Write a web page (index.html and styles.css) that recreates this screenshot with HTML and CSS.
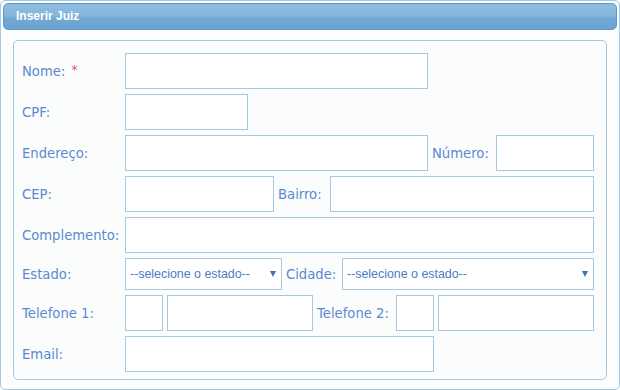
FILE: index.html
```html
<!DOCTYPE html>
<html lang="pt-BR">
<head>
  <meta charset="UTF-8" />
  <title>Inserir Juiz</title>
  <link rel="stylesheet" href="styles.css">
</head>
<body>

  <div class="panel">
    <div class="panel-header">Inserir Juiz</div>

    <div class="form-box">
      <div class="row">
        <label class="lbl">Nome: <span class="req">*</span></label>
        <input type="text" class="txt w-nome" />
      </div>
      <div class="row">
        <label class="lbl">CPF:</label>
        <input type="text" class="txt w-cpf" />
      </div>
      <div class="row">
        <label class="lbl">Endereço:</label>
        <input type="text" class="txt w-nome" />
        <label class="lbl-in w-numero-lbl">Número:</label>
        <input type="text" class="txt fill" />
      </div>
      <div class="row">
        <label class="lbl">CEP:</label>
        <input type="text" class="txt w-cep" />
        <label class="lbl-in w-bairro-lbl">Bairro:</label>
        <input type="text" class="txt fill" />
      </div>
      <div class="row">
        <label class="lbl">Complemento:</label>
        <input type="text" class="txt fill" />
      </div>
      <div class="row">
        <label class="lbl">Estado:</label>
        <span class="sel-wrap w-estado">
          <select class="sel"><option>--selecione o estado--</option></select>
        </span>
        <label class="lbl-in w-cidade-lbl">Cidade:</label>
        <span class="sel-wrap fill">
          <select class="sel"><option>--selecione o estado--</option></select>
        </span>
      </div>
      <div class="row">
        <label class="lbl">Telefone 1:</label>
        <input type="text" class="txt w-ddd" />
        <input type="text" class="txt w-fone1" />
        <label class="lbl-in w-fone-lbl">Telefone 2:</label>
        <input type="text" class="txt w-ddd" />
        <input type="text" class="txt fill" />
      </div>
      <div class="row">
        <label class="lbl">Email:</label>
        <input type="text" class="txt w-email" />
      </div>
    </div>
  </div>

</body>
</html>
```

FILE: styles.css
```css
body {
  margin: 0;
  background: #fff;
  font-family: "DejaVu Sans", Verdana, sans-serif;
}
.panel {
  box-sizing: border-box;
  width: 620px;
  height: 390px;
  padding: 2px;
  border: 1px solid #a6c9e2;
  border-radius: 5px;
  background: #fcfdfd;
}
.panel-header {
  box-sizing: border-box;
  height: 27px;
  padding-left: 12px;
  border: 1px solid #5b9bd1;
  border-radius: 5px;
  background: linear-gradient(to bottom, #8fbde1 0%, #85b5db 48%, #72a9d3 56%, #6aa3cf 100%);
  color: #fff;
  font-family: "Liberation Sans", Arial, sans-serif;
  font-weight: bold;
  font-size: 12px;
  line-height: 25px;
}
.form-box {
  margin: 10px 10px 0;
  padding: 12px 12px 7px 8px;
  border: 1px solid #a6c9e2;
  border-radius: 5px;
  background: #fbfdfd;
}
.row {
  display: flex;
  align-items: center;
  gap: 4px;
  margin-bottom: 5px;
}
.row:last-child {
  margin-bottom: 0;
}
.lbl, .lbl-in {
  flex: none;
  color: #5b89d1;
  font-size: 13.2px;
}
.lbl {
  width: 99px;
}
.req {
  color: #ec4f7f;
  font-size: 12px;
  vertical-align: 2px;
  margin-left: 2px;
}
.txt {
  box-sizing: border-box;
  height: 36px;
  margin: 0;
  padding: 0 4px;
  border: 1px solid #a6c9e2;
  background: #fff;
  flex: none;
  outline: none;
}
.fill {
  flex: 1;
  min-width: 0;
}
.w-nome { width: 303px; }
.w-cpf { width: 123px; }
.w-cep { width: 149px; }
.w-ddd { width: 38px; }
.w-fone1 { width: 146px; }
.w-email { width: 309px; }
.w-estado { width: 157px; }
.w-numero-lbl { width: 60px; }
.w-bairro-lbl { width: 48px; }
.w-cidade-lbl { width: 52px; }
.w-fone-lbl { width: 75px; }

.sel-wrap {
  position: relative;
  display: block;
  flex: none;
  height: 32px;
}
.sel-wrap.fill {
  flex: 1;
}
.sel-wrap::after {
  content: "";
  position: absolute;
  right: 6px;
  top: 13px;
  border-left: 3.5px solid transparent;
  border-right: 3.5px solid transparent;
  border-top: 6px solid #3f6fbf;
  pointer-events: none;
}
.sel {
  -webkit-appearance: none;
  appearance: none;
  box-sizing: border-box;
  width: 100%;
  height: 32px;
  margin: 0;
  padding: 0 16px 0 4px;
  border: 1px solid #a6c9e2;
  border-radius: 0;
  background: #fff;
  color: #4d7cc7;
  font-family: "Liberation Sans", Arial, sans-serif;
  font-size: 12.4px;
  outline: none;
}
```
